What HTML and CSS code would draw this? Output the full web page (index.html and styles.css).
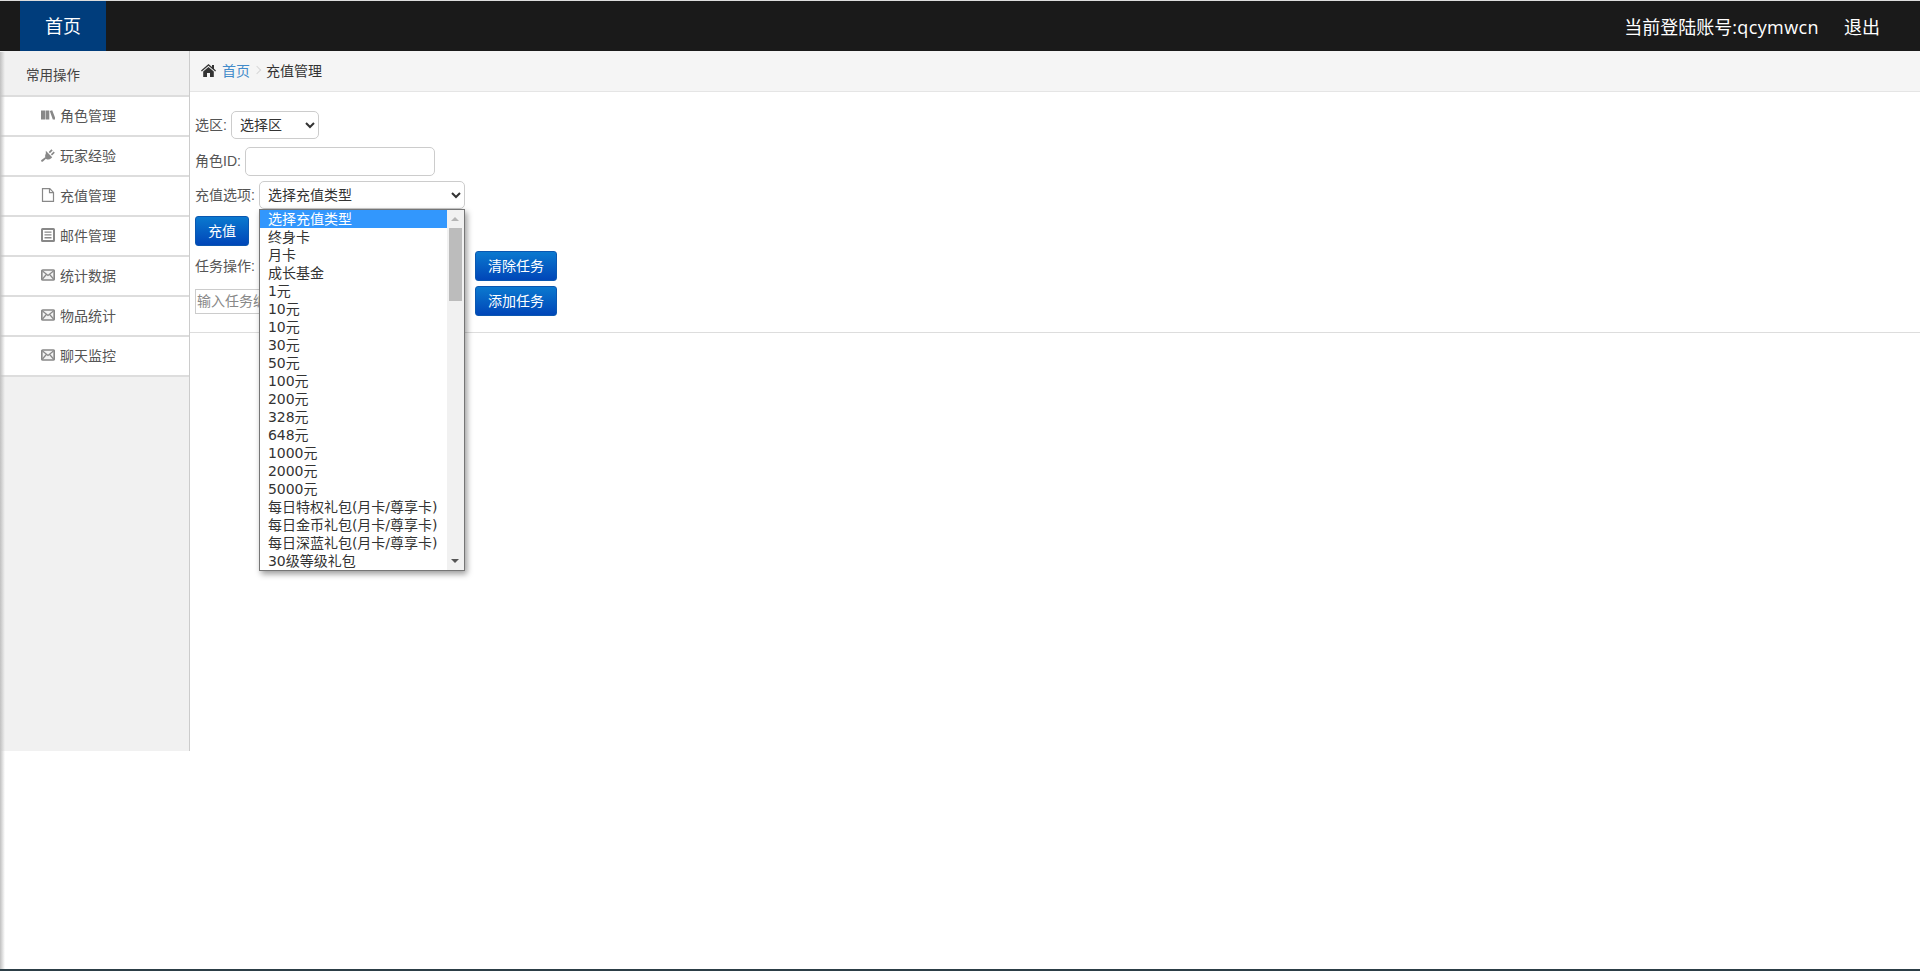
FILE: index.html
```html
<!DOCTYPE html>
<html lang="zh-CN">
<head>
    <meta charset="UTF-8">
    <title>充值管理</title>
    <link rel="stylesheet" href="styles.css">
</head>
<body>
    <header class="topbar">
        <a class="home-tab" href="#">首页</a>
        <div class="account">
            <span>当前登陆账号<span class="account-name">:qcymwcn</span></span>
            <a href="#">退出</a>
        </div>
    </header>
    <div class="layout">
        <aside class="sidebar">
            <div class="side-title">常用操作</div>
            <a class="side-item" href="#">
                <svg class="side-icon" viewBox="0 0 14 14"><path d="M0 2.500h4v9H0zM4.500 2.500h3.800v9H4.500zM8.800 3l2.400-0.800 2.800 7.300v2h-2.200z"/></svg>
                角色管理
            </a>
            <a class="side-item" href="#">
                <svg class="side-icon" viewBox="0 0 14 14"><path d="M4.800 2.800l6.400 6.400-1 1c-1.500 1.500-3.600 1.700-5 0.700-1.200-1.200-1.500-3.400-0.400-5.100zM7.700 4.100l2.700-2.900 1.300 1.300-2.800 2.800zM9.900 6.300l2.800-2.800 1.100 1.200-2.800 2.800zM5.200 8.500l1 1-4.500 4.300-1.500-0.300-0.100-1.300z"/></svg>
                玩家经验
            </a>
            <a class="side-item" href="#">
                <svg class="side-icon" viewBox="0 0 14 14"><path class="line" d="M1.500 0.700h7.300l3.700 3.700v8.900h-11zM8.500 0.700v4h4"/></svg>
                充值管理
            </a>
            <a class="side-item" href="#">
                <svg class="side-icon" viewBox="0 0 14 14"><path fill-rule="evenodd" d="M1.500 0h11A1.500 1.500 0 0 1 14 1.500v11a1.500 1.500 0 0 1-1.500 1.500h-11A1.500 1.500 0 0 1 0 12.500v-11A1.500 1.500 0 0 1 1.500 0zM2 2v10h10V2zM3.500 3.500h7v1.300h-7zM3.500 6.300h7v1.300h-7zM3.500 9.100h7v1.300h-7z"/></svg>
                邮件管理
            </a>
            <a class="side-item" href="#">
                <svg class="side-icon" viewBox="0 0 14 14"><rect class="box" x="0.800" y="2" width="12.400" height="10" rx="1"/><path class="line" d="M1.500 3l5.500 4.500L12.500 3M1.500 11l3.800-4.500M12.500 11L8.700 6.500"/></svg>
                统计数据
            </a>
            <a class="side-item" href="#">
                <svg class="side-icon" viewBox="0 0 14 14"><rect class="box" x="0.800" y="2" width="12.400" height="10" rx="1"/><path class="line" d="M1.500 3l5.500 4.500L12.500 3M1.500 11l3.800-4.500M12.500 11L8.700 6.500"/></svg>
                物品统计
            </a>
            <a class="side-item" href="#">
                <svg class="side-icon" viewBox="0 0 14 14"><rect class="box" x="0.800" y="2" width="12.400" height="10" rx="1"/><path class="line" d="M1.500 3l5.500 4.500L12.500 3M1.500 11l3.800-4.500M12.500 11L8.700 6.500"/></svg>
                聊天监控
            </a>
        </aside>
        <main class="content">
            <div class="breadcrumb">
                <svg class="home-icon" viewBox="0 0 15 13"><path d="M7.500 0L11 3V1h2v3.700L15 6.500l-0.800 0.900L7.500 1.700 0.800 7.400 0 6.500zM7.500 3l5.300 4.500V13H9V9H6v4H2.200V7.500z"/></svg>
                <a href="#">首页</a>
                <span class="crumb-sep"></span>
                <span>充值管理</span>
            </div>
            <form class="recharge-form">
                <div class="form-row row-area">
                    <label>选区:</label>
                    <select class="area-select"><option>选择区</option></select>
                </div>
                <div class="form-row row-role">
                    <label>角色ID:</label>
                    <input class="role-input" type="text">
                </div>
                <div class="form-row row-type">
                    <label>充值选项:</label>
                    <div class="select-wrap">
                        <select class="type-select"><option>选择充值类型</option></select>
                        <ul class="option-list">
                            <li class="active">选择充值类型</li>
                            <li>终身卡</li>
                            <li>月卡</li>
                            <li>成长基金</li>
                            <li>1元</li>
                            <li>10元</li>
                            <li>10元</li>
                            <li>30元</li>
                            <li>50元</li>
                            <li>100元</li>
                            <li>200元</li>
                            <li>328元</li>
                            <li>648元</li>
                            <li>1000元</li>
                            <li>2000元</li>
                            <li>5000元</li>
                            <li>每日特权礼包(月卡/尊享卡)</li>
                            <li>每日金币礼包(月卡/尊享卡)</li>
                            <li>每日深蓝礼包(月卡/尊享卡)</li>
                            <li>30级等级礼包</li>
                            <li class="scrollbar">
                                <span class="arrow-up"></span>
                                <span class="thumb"></span>
                                <span class="arrow-down"></span>
                            </li>
                        </ul>
                    </div>
                </div>
                <div class="form-row row-submit">
                    <button class="btn" type="button">充值</button>
                </div>
                <div class="task-grid">
                    <label>任务操作:</label>
                    <button class="btn" type="button">清除任务</button>
                    <input class="task-input" type="text" placeholder="输入任务编号">
                    <button class="btn" type="button">添加任务</button>
                </div>
            </form>
        </main>
    </div>
    <div class="edge-shadow"></div>
    <div class="bottom-strip"></div>
</body>
</html>
```

FILE: styles.css
```css
html, body {
    margin: 0;
    height: 100%;
    overflow: hidden;
}
body {
    position: relative;
    background: #fff;
    color: #333;
    font-family: "Liberation Sans", "Noto Sans CJK SC", sans-serif;
    font-size: 14px;
}
a {
    text-decoration: none;
}

/* top bar */
.topbar {
    display: flex;
    justify-content: space-between;
    height: 50px;
    border-top: 1px solid #ddd;
    background: #1a1a1a;
    color: #fff;
    font-family: "Open Sans", "Noto Sans CJK SC", sans-serif;
    font-size: 18px;
}
.home-tab {
    display: block;
    margin-left: 20px;
    width: 86px;
    background: #003d7c;
    color: #fff;
    line-height: 50px;
    text-align: center;
}
.account {
    display: flex;
    gap: 25px;
    padding-right: 40px;
    line-height: 52px;
}
.account a {
    color: #fff;
}
.account-name {
    letter-spacing: 0.4px;
}

/* sidebar */
.layout {
    display: flex;
    align-items: flex-start;
}
.sidebar {
    flex: none;
    box-sizing: border-box;
    width: 190px;
    height: 700px;
    border-right: 1px solid #ccc;
    background: #f1f1f1;
}
.side-title {
    box-sizing: border-box;
    height: 46px;
    padding: 13px 0 0 26px;
    border-bottom: 2px solid #ddd;
    color: #444;
    font-size: 13.500px;
}
.side-item {
    display: flex;
    align-items: center;
    gap: 5px;
    box-sizing: border-box;
    height: 40px;
    padding: 0 0 2px 41px;
    border-bottom: 2px solid #ddd;
    background: #fff;
    color: #555;
}
.side-icon {
    width: 14px;
    height: 14px;
    fill: #888;
}
.side-icon .line {
    fill: none;
    stroke: #888;
    stroke-width: 1.200;
}
.side-icon .box {
    fill: #f2f2f2;
    stroke: #888;
    stroke-width: 1.700;
}

/* main area */
.content {
    flex: 1;
}
.breadcrumb {
    display: flex;
    align-items: center;
    box-sizing: border-box;
    height: 41px;
    padding: 0 0 2px 11px;
    border-bottom: 1px solid #e5e5e5;
    background: #f5f5f5;
    color: #333;
}
.breadcrumb a {
    color: #428bca;
}
.home-icon {
    width: 15px;
    height: 13px;
    margin-right: 6px;
    fill: #333;
}
.crumb-sep {
    width: 5px;
    height: 5px;
    margin: 0 6px 0 4px;
    border-top: 1px solid #d8d8d8;
    border-right: 1px solid #d8d8d8;
    transform: rotate(45deg);
}
.recharge-form {
    padding: 19px 5px 16px;
    border-bottom: 1px solid #ddd;
    color: #555;
}
.recharge-form label {
    padding-bottom: 2px;
}
.recharge-form .row-role label {
    padding-bottom: 4px;
}
.form-row {
    display: flex;
    align-items: center;
    gap: 4px;
}
.row-area {
    height: 28px;
    margin-bottom: 8px;
}
.row-role {
    height: 29px;
    margin-bottom: 5px;
}
.row-type {
    height: 28px;
    margin-bottom: 7px;
}
.row-submit {
    height: 30px;
    margin-bottom: 5px;
}
select {
    box-sizing: border-box;
    height: 28px;
    padding: 0 4px;
    border: 1px solid #ccc;
    border-radius: 5px;
    background: #fff;
    color: #333;
    font-family: inherit;
    font-size: 14px;
}
.area-select {
    width: 88px;
}
.type-select {
    width: 206px;
}
.role-input {
    box-sizing: border-box;
    width: 190px;
    height: 29px;
    border: 1px solid #ccc;
    border-radius: 5px;
}
.select-wrap {
    position: relative;
    height: 28px;
}
.btn {
    height: 30px;
    padding: 0 12px 2px;
    border: 1px solid #0a57b0;
    border-radius: 3px;
    background: linear-gradient(#0b79cf, #0046b8);
    color: #fff;
    font-family: inherit;
    font-size: 14px;
}
.task-grid {
    display: grid;
    grid-template-columns: 280px auto;
    grid-auto-rows: 30px;
    justify-content: start;
    row-gap: 5px;
    align-items: center;
}
.task-input {
    box-sizing: border-box;
    width: 270px;
    height: 25px;
    padding: 0 1px;
    border: 1px solid #ccc;
    font-family: inherit;
    font-size: 14px;
}
.task-input::placeholder {
    color: #888;
}

/* open dropdown of the recharge type select */
.option-list {
    position: absolute;
    top: 100%;
    left: 0;
    box-sizing: border-box;
    width: 206px;
    height: 362px;
    margin: 0;
    padding: 0;
    overflow: hidden;
    list-style: none;
    border: 1px solid #767676;
    background: #fff;
    box-shadow: 2px 3px 6px rgba(0, 0, 0, 0.4);
    color: #333;
    font-family: "DejaVu Sans", "Noto Sans CJK SC", sans-serif;
    font-size: 14px;
    line-height: 18px;
}
.option-list li {
    box-sizing: border-box;
    height: 18px;
    width: 188px;
    padding-left: 8px;
    white-space: nowrap;
}
.option-list li.active {
    background: #3297fd;
    color: #fff;
}
.option-list li.scrollbar {
    position: absolute;
    top: 0;
    right: 0;
    width: 17px;
    height: 100%;
    padding: 0;
    background: #f1f1f1;
}
.thumb {
    position: absolute;
    top: 18px;
    left: 2px;
    width: 13px;
    height: 73px;
    background: #bcbcbc;
}
.arrow-up, .arrow-down {
    position: absolute;
    left: 4px;
    width: 0;
    height: 0;
    border-left: 4px solid transparent;
    border-right: 4px solid transparent;
}
.arrow-up {
    top: 7px;
    border-bottom: 4px solid #b5b5b5;
}
.arrow-down {
    bottom: 7px;
    border-top: 4px solid #555;
}

/* window edges caught in the capture */
.edge-shadow {
    position: absolute;
    top: 52px;
    bottom: 0;
    left: 0;
    width: 5px;
    background: linear-gradient(to right, #c0c0c0, rgba(230, 230, 230, 0));
}
.bottom-strip {
    position: absolute;
    right: 0;
    bottom: 0;
    left: 0;
    height: 2px;
    background: #2c3e46;
}
```
